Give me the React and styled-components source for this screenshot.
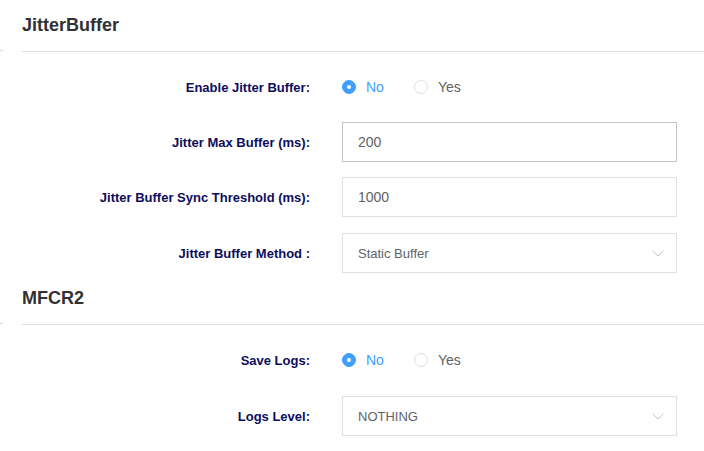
import React, { useState } from 'react';
import styled, { createGlobalStyle } from 'styled-components';

const GlobalStyle = createGlobalStyle`
    body {
        margin: 0;
        background: #fff;
        font-family: "Liberation Sans", Arial, sans-serif;
    }
`;

const Page = styled.div`
    width: 704px;
    height: 451px;
    overflow: hidden;
    background: #fff;
`;

const SectionHeader = styled.div`
    display: flex;
    align-items: flex-end;
    gap: 19px;
`;

const Stub = styled.div`
    width: 3px;
    height: 1px;
    margin-bottom: 1px;
    background: #d8dae6;
    flex-shrink: 0;
`;

const Title = styled.h3`
    flex: 1;
    margin: 0;
    height: 51px;
    line-height: 51px;
    font-size: 18px;
    font-weight: bold;
    color: #303133;
    border-bottom: 1px solid #dcdfe6;
`;

const Form = styled.div`
    display: flex;
    flex-direction: column;
    padding: 15px 0 0 22px;
`;

const Row = styled.div`
    display: flex;
    align-items: center;
    gap: 32px;
    height: 40px;
    margin-top: ${p => p.$top || 0}px;
`;

const Label = styled.label`
    width: 288px;
    text-align: right;
    font-size: 13px;
    font-weight: bold;
    color: #0d0d5c;
`;

const RadioGroup = styled.div`
    display: flex;
    align-items: center;
`;

const RadioItem = styled.label`
    display: flex;
    align-items: center;
    gap: 10px;
    margin-right: 30px;
    font-size: 14px;
    color: ${p => (p.$checked ? '#409eff' : '#606266')};
    cursor: pointer;
`;

const Dot = styled.span`
    box-sizing: border-box;
    width: 14px;
    height: 14px;
    border-radius: 50%;
    border: 1px solid ${p => (p.$checked ? '#409eff' : '#dcdfe6')};
    background: ${p => (p.$checked ? '#409eff' : '#fff')};
    display: flex;
    align-items: center;
    justify-content: center;

    &::after {
        content: '';
        width: 4px;
        height: 4px;
        border-radius: 50%;
        background: #fff;
        display: ${p => (p.$checked ? 'block' : 'none')};
    }
`;

const Input = styled.input`
    box-sizing: border-box;
    width: 335px;
    height: 40px;
    padding: 0 15px;
    border: 1px solid ${p => (p.$focus ? '#c0c4cc' : '#dcdfe6')};
    border-radius: 0;
    outline: none;
    font-family: "Liberation Sans", Arial, sans-serif;
    font-size: 14px;
    color: #606266;
`;

const SelectBox = styled.div`
    box-sizing: border-box;
    width: 335px;
    height: 40px;
    padding: 0 12px 0 15px;
    border: 1px solid #dcdfe6;
    display: flex;
    align-items: center;
    justify-content: space-between;
    font-size: 13px;
    color: #606266;
`;

function Radio({ value, onChange }) {
    return (
        <RadioGroup>
            {['No', 'Yes'].map(opt => (
                <RadioItem key={opt} $checked={value === opt} onClick={() => onChange(opt)}>
                    <Dot $checked={value === opt} />
                    {opt}
                </RadioItem>
            ))}
        </RadioGroup>
    );
}

function Select({ value }) {
    return (
        <SelectBox>
            <span>{value}</span>
            <svg width="12" height="7" viewBox="0 0 12 7">
                <path d="M0.5 0.8 L6 6 L11.5 0.8" fill="none" stroke="#c0c4cc" strokeWidth="1" />
            </svg>
        </SelectBox>
    );
}

export default function App() {
    const [jitter, setJitter] = useState('No');
    const [logs, setLogs] = useState('No');

    return (
        <Page>
            <GlobalStyle />
            <SectionHeader>
                <Stub />
                <Title>JitterBuffer</Title>
            </SectionHeader>
            <Form>
                <Row>
                    <Label>Enable Jitter Buffer:</Label>
                    <Radio value={jitter} onChange={setJitter} />
                </Row>
                <Row $top={15}>
                    <Label>Jitter Max Buffer (ms):</Label>
                    <Input $focus defaultValue="200" />
                </Row>
                <Row $top={15}>
                    <Label>Jitter Buffer Sync Threshold (ms):</Label>
                    <Input defaultValue="1000" />
                </Row>
                <Row $top={16}>
                    <Label>Jitter Buffer Method :</Label>
                    <Select value="Static Buffer" />
                </Row>
            </Form>
            <SectionHeader>
                <Stub />
                <Title>MFCR2</Title>
            </SectionHeader>
            <Form>
                <Row>
                    <Label>Save Logs:</Label>
                    <Radio value={logs} onChange={setLogs} />
                </Row>
                <Row $top={16}>
                    <Label>Logs Level:</Label>
                    <Select value="NOTHING" />
                </Row>
            </Form>
        </Page>
    );
}
